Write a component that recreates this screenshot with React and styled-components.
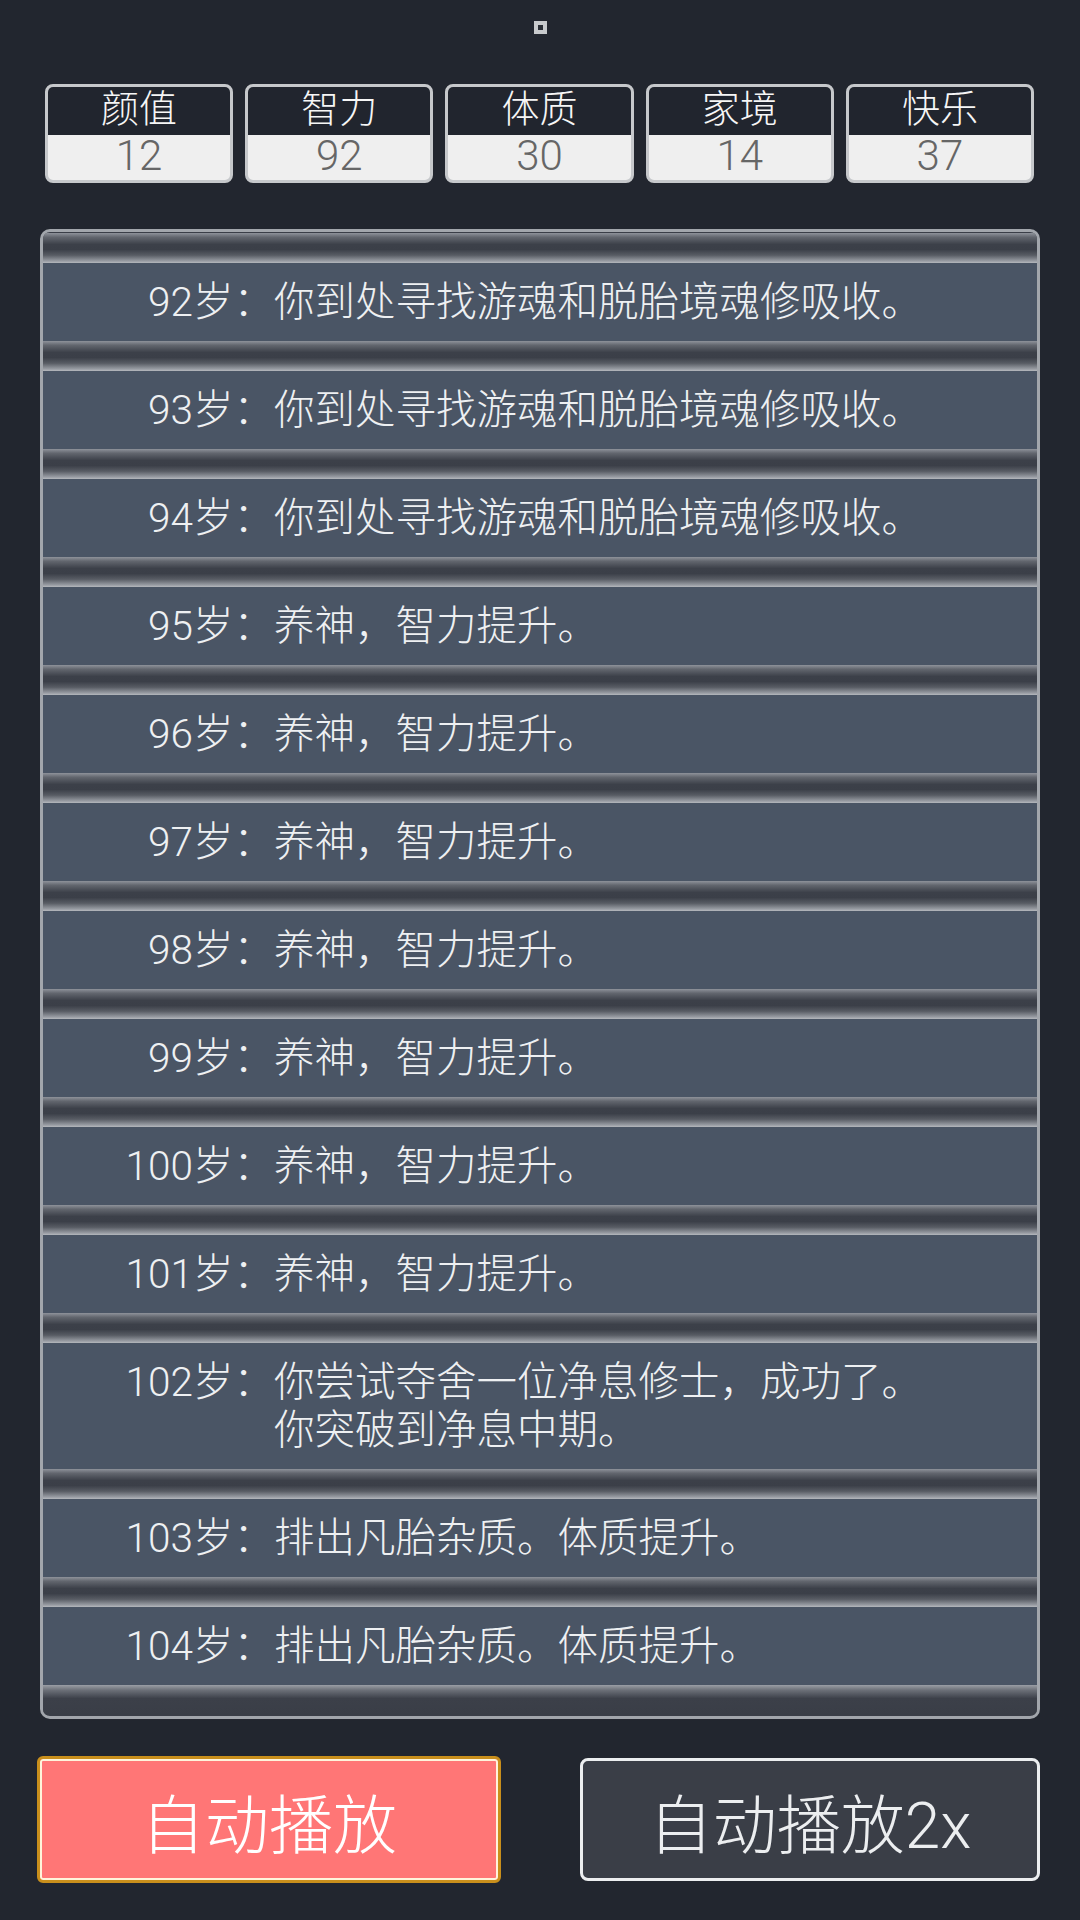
import React from "react";
import styled, { createGlobalStyle } from "styled-components";

const GlobalStyle = createGlobalStyle`
  html, body {
    margin: 0;
    padding: 0;
    background: #22262f;
  }
  body {
    font-family: Roboto, "Noto Sans CJK SC", "Noto Sans", sans-serif;
    font-weight: 300;
    color: #eef0f2;
  }
  * { box-sizing: border-box; }
`;

const Page = styled.div`
  width: 1080px;
  height: 1920px;
  background: #22262f;
  padding-top: 21px;
  display: flex;
  flex-direction: column;
  overflow: hidden;
`;

const Indicator = styled.div`
  width: 13px;
  height: 13px;
  margin: 0 auto;
  border: 4px solid #c8cacd;
  background: #2a2e36;
`;

const StatsRow = styled.div`
  margin-top: 50px;
  padding: 0 46px 0 45px;
  display: flex;
  gap: 12px;
`;

const StatBox = styled.div`
  flex: 1;
  height: 99px;
  border: 3px solid #c6c8cb;
  border-radius: 8px;
  overflow: hidden;
  display: flex;
  flex-direction: column;
  background: #efefef;
`;

const StatLabel = styled.div`
  height: 48px;
  background: #21252e;
  color: #f6f6f6;
  font-size: 38px;
  line-height: 44px;
  text-align: center;
`;

const StatValue = styled.div`
  flex: 1;
  color: #666666;
  font-size: 42px;
  line-height: 42px;
  text-align: center;
`;

const Panel = styled.div`
  margin: 46px 40px 0 40px;
  height: 1490px;
  border: 3px solid #a2a6ac;
  border-radius: 10px;
  background: #3a3e47;
  overflow: hidden;
  padding-top: 1px;
`;

const Groove = styled.div`
  height: 30px;
  background: linear-gradient(
    180deg,
    #8e929a 0%,
    #62666e 14%,
    #3c4049 38%,
    #3b3f48 55%,
    #585c64 74%,
    #979ba2 93%,
    #b5b8bd 100%
  );
`;

const EndCap = styled.div`
  height: 30px;
  background: linear-gradient(
    180deg,
    #9a9ea5 0%,
    #6a6e76 18%,
    #3c4049 45%,
    #3a3e47 100%
  );
`;

const Row = styled.div`
  background: #4a5565;
  display: grid;
  grid-template-columns: 231px 1fr;
  padding: 15px 0;
  font-size: 40.5px;
  line-height: 48px;
  color: #eef0f2;
`;

const Age = styled.div`
  text-align: right;
  white-space: nowrap;
`;

const Text = styled.div`
  white-space: pre-line;
`;

const ButtonRow = styled.div`
  margin-top: 37px;
  padding: 0 40px 0 37px;
  display: flex;
  justify-content: space-between;
  align-items: center;
`;

const PrimaryButton = styled.div`
  width: 464px;
  height: 127px;
  border: 3px solid #c98f1c;
  border-radius: 6px;
  box-shadow: inset 0 0 0 2px #fff4dc;
  background: #ff7676;
  color: #ffffff;
  font-size: 64px;
  display: flex;
  align-items: center;
  justify-content: center;
`;

const SecondaryButton = styled.div`
  width: 460px;
  height: 123px;
  border: 3px solid #eceef0;
  border-radius: 8px;
  background: #3a3e47;
  color: #eceef0;
  font-size: 64px;
  display: flex;
  align-items: center;
  justify-content: center;
`;

const stats = [
  ["颜值", 12],
  ["智力", 92],
  ["体质", 30],
  ["家境", 14],
  ["快乐", 37],
];

const absorb = "你到处寻找游魂和脱胎境魂修吸收。";
const nourish = "养神，智力提升。";
const expel = "排出凡胎杂质。体质提升。";

const events = [
  [92, absorb],
  [93, absorb],
  [94, absorb],
  [95, nourish],
  [96, nourish],
  [97, nourish],
  [98, nourish],
  [99, nourish],
  [100, nourish],
  [101, nourish],
  [102, "你尝试夺舍一位净息修士，成功了。\n你突破到净息中期。"],
  [103, expel],
  [104, expel],
];

export default function App() {
  return (
    <Page>
      <GlobalStyle />
      <Indicator />
      <StatsRow>
        {stats.map(([label, value]) => (
          <StatBox key={label}>
            <StatLabel>{label}</StatLabel>
            <StatValue>{value}</StatValue>
          </StatBox>
        ))}
      </StatsRow>
      <Panel>
        {events.map(([age, text]) => (
          <React.Fragment key={age}>
            <Groove />
            <Row>
              <Age>{age}岁：</Age>
              <Text>{text}</Text>
            </Row>
          </React.Fragment>
        ))}
        <EndCap />
      </Panel>
      <ButtonRow>
        <PrimaryButton>自动播放</PrimaryButton>
        <SecondaryButton>自动播放2x</SecondaryButton>
      </ButtonRow>
    </Page>
  );
}
